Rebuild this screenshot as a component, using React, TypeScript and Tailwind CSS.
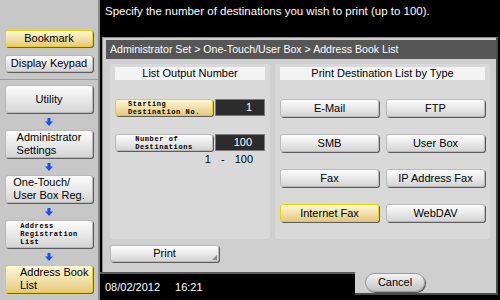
import type { ReactNode } from "react";

function Btn({
  children,
  active = false,
  className = "",
}: {
  children: ReactNode;
  active?: boolean;
  className?: string;
}) {
  return (
    <div
      className={`flex items-center justify-center rounded-[3px] border text-black shadow-[1px_1px_0_#5c5c5c] ${
        active
          ? "border-[#f2d000] bg-linear-to-b from-[#fff9d6] to-[#e4ca80]"
          : "border-[#b9b9b9] bg-linear-to-b from-[#fdfdfd] to-[#d5d5d5]"
      } ${className}`}
    >
      {children}
    </div>
  );
}

function Arrow() {
  return (
    <div className="flex h-[17px] items-center justify-center">
      <svg width="8" height="8" viewBox="0 0 8 8">
        <path d="M2.5 0h3v3.5H8L4 8 0 3.5h2.5z" fill="#1c4ff0" />
      </svg>
    </div>
  );
}

const small =
  "font-['Liberation_Mono',monospace] font-bold text-[7px] leading-[8px] tracking-[0.6px] text-left";

const two = "text-left leading-[12.6px]";

const types = [
  { label: "E-Mail" },
  { label: "FTP" },
  { label: "SMB" },
  { label: "User Box" },
  { label: "Fax" },
  { label: "IP Address Fax" },
  { label: "Internet Fax", active: true },
  { label: "WebDAV" },
];

export default function App() {
  return (
    <div className="flex h-[300px] w-[500px] overflow-hidden bg-black font-['Liberation_Sans',Arial,sans-serif] text-[11px]">
      <aside className="flex w-[100px] shrink-0 flex-col border-r-2 border-[#8a8a8a] bg-[#c7c7c7]">
        <div className="flex h-[80px] flex-col gap-[8px] border-b border-[#9c9c9c] px-[5px] pt-[30px]">
          <Btn active className="h-[17px]">Bookmark</Btn>
          <Btn className="h-[17px]">Display Keypad</Btn>
        </div>
        <div className="flex flex-col px-[5px] pt-[5px]">
          <Btn className="h-[28px]">Utility</Btn>
          <Arrow />
          <Btn className="h-[28px]">
            <div className={two}>
              Administrator
              <br />
              Settings
            </div>
          </Btn>
          <Arrow />
          <Btn className="h-[28px]">
            <div className={two}>
              One-Touch/
              <br />
              User Box Reg.
            </div>
          </Btn>
          <Arrow />
          <Btn className="h-[28px]">
            <div className={small}>
              Address
              <br />
              Registration
              <br />
              List
            </div>
          </Btn>
          <Arrow />
          <Btn active className="h-[28px] !justify-start pl-[14px]">
            <div className={two}>
              Address Book
              <br />
              List
            </div>
          </Btn>
        </div>
      </aside>

      <main className="flex flex-1 flex-col">
        <div className="h-[37px] pl-[5px] pt-[3px] text-[11.5px] text-white">
          Specify the number of destinations you wish to print (up to 100).
        </div>

        <div className="ml-[2px] flex h-[235px] w-[396px] flex-col border-l border-t border-r-2 border-l-[#8e8e8e] border-t-[#8e8e8e] border-r-[#4a4a4a] bg-[#cfcfcf]">
          <div className="ml-[3px] mt-[2px] flex h-[19px] items-center bg-[#565656] pl-[4px] text-[10.6px] text-white">
            Administrator Set &gt; One-Touch/User Box &gt; Address Book List
          </div>

          <div className="mt-[5px] flex gap-[5px] pl-[7px]">
            <section className="flex h-[175px] w-[160px] flex-col rounded-[2px] bg-[#d9d9d9] px-[5px] pt-[3px]">
              <div className="flex h-[13px] items-center justify-center bg-[#f3f3f3]">List Output Number</div>
              <div className="mt-[19px] flex h-[17px] gap-[2px]">
                <Btn active className="w-[98px]">
                  <div className={small}>
                    Starting
                    <br />
                    Destination No.
                  </div>
                </Btn>
                <div className="flex w-[50px] items-center justify-end border border-[#7a7a7a] bg-[#2c2c2c] pr-[12px] text-white">
                  1
                </div>
              </div>
              <div className="mt-[18px] flex h-[17px] gap-[2px]">
                <Btn className="w-[98px]">
                  <div className={small}>
                    Number of
                    <br />
                    Destinations
                  </div>
                </Btn>
                <div className="flex w-[50px] items-center justify-end border border-[#7a7a7a] bg-[#2c2c2c] pr-[12px] text-white">
                  100
                </div>
              </div>
              <div className="mt-[2px] flex justify-end gap-[10px] pr-[12px] leading-[12px]">
                <span>1</span>
                <span>-</span>
                <span>100</span>
              </div>
            </section>

            <section className="flex h-[175px] w-[215px] flex-col rounded-[2px] bg-[#d9d9d9] px-[5px] pt-[3px]">
              <div className="flex h-[13px] items-center justify-center bg-[#f3f3f3]">
                Print Destination List by Type
              </div>
              <div className="mt-[19px] grid grid-cols-2 gap-x-[7px] gap-y-[17px]">
                {types.map((t) => (
                  <Btn key={t.label} active={t.active} className="h-[18px]">
                    {t.label}
                  </Btn>
                ))}
              </div>
            </section>
          </div>

          <div className="mt-[6px] pl-[7px]">
            <Btn className="relative h-[17px] w-[109px]">
              Print
              <span className="absolute bottom-[1px] right-[1px] h-0 w-0 border-b-[5px] border-l-[5px] border-b-[#8a8a8a] border-l-transparent" />
            </Btn>
          </div>
        </div>

        <div className="flex h-[28px]">
          <div className="flex flex-1 gap-[15px] border-t-2 border-[#5a5a5a] pl-[5px] pt-[5px] text-white">
            <span>08/02/2012</span>
            <span>16:21</span>
          </div>
          <div className="mr-[2px] h-[23px] w-[143px] border-b-2 border-r-2 border-[#4a4a4a] bg-[#cfcfcf] pl-[10px] pt-[1px]">
            <div className="flex h-[19px] w-[60px] items-center justify-center rounded-full border border-[#9a9a9a] bg-linear-to-b from-[#f4f4f4] to-[#c2c2c2] shadow-[1px_1px_0_#555]">
              Cancel
            </div>
          </div>
        </div>
      </main>
    </div>
  );
}
